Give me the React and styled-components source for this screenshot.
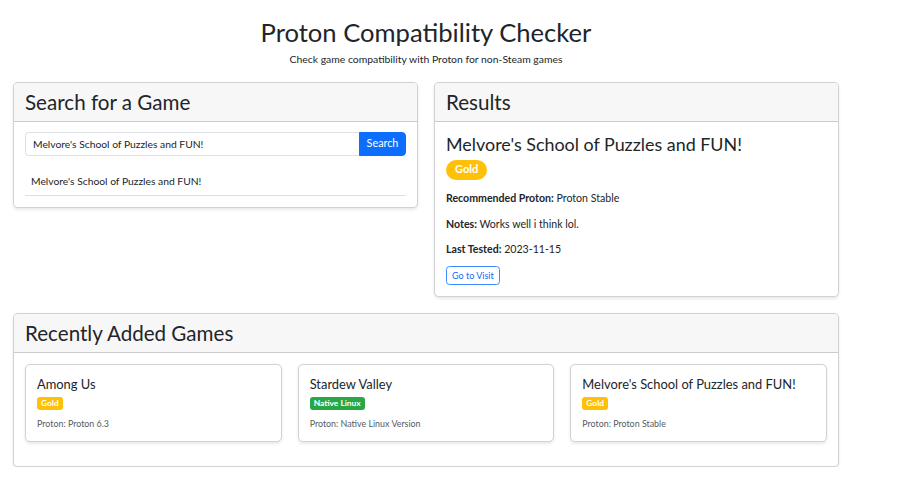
import styled, { createGlobalStyle } from "styled-components";

const GlobalStyle = createGlobalStyle`
  * {
    box-sizing: border-box;
  }

  body {
    margin: 0;
    background: #fff;
    color: #212529;
    font-family: Lato, "Open Sans", sans-serif;
    font-size: 10.3px;
    line-height: 16.8px;
  }
`;

const games = [
  { name: "Among Us", rating: "Gold", proton: "Proton 6.3" },
  { name: "Stardew Valley", rating: "Native Linux", proton: "Native Linux Version" },
  { name: "Melvore's School of Puzzles and FUN!", rating: "Gold", proton: "Proton Stable" },
];

const ratingColors = {
  Gold: "#ffc107",
  "Native Linux": "#28a745",
};

export default function App() {
  return (
    <>
      <GlobalStyle />
      <Container>
        <Header>
          <Title>Proton Compatibility Checker</Title>
          <Subtitle>Check game compatibility with Proton for non-Steam games</Subtitle>
        </Header>

        <TopRow>
          <Card>
            <CardHeader>
              <CardTitle>Search for a Game</CardTitle>
            </CardHeader>
            <CardBody>
              <SearchGroup>
                <SearchInput defaultValue="Melvore's School of Puzzles and FUN!" />
                <SearchButton type="button">Search</SearchButton>
              </SearchGroup>
              <ResultList>
                <ResultItem>Melvore's School of Puzzles and FUN!</ResultItem>
              </ResultList>
            </CardBody>
          </Card>

          <Card>
            <CardHeader>
              <CardTitle>Results</CardTitle>
            </CardHeader>
            <CardBody>
              <GameTitle>Melvore's School of Puzzles and FUN!</GameTitle>
              <PillBadge $color={ratingColors.Gold}>Gold</PillBadge>
              <Detail>
                <strong>Recommended Proton:</strong> Proton Stable
              </Detail>
              <Detail>
                <strong>Notes:</strong> Works well i think lol.
              </Detail>
              <Detail>
                <strong>Last Tested:</strong> 2023-11-15
              </Detail>
              <VisitButton type="button">Go to Visit</VisitButton>
            </CardBody>
          </Card>
        </TopRow>

        <RecentCard>
          <CardHeader>
            <CardTitle>Recently Added Games</CardTitle>
          </CardHeader>
          <CardBody $bottom="24px">
            <GameGrid>
              {games.map((game) => (
                <GameCard key={game.name}>
                  <GameName>{game.name}</GameName>
                  <SmallBadge $color={ratingColors[game.rating]}>{game.rating}</SmallBadge>
                  <ProtonText>Proton: {game.proton}</ProtonText>
                </GameCard>
              ))}
            </GameGrid>
          </CardBody>
        </RecentCard>
      </Container>
    </>
  );
}

const Container = styled.div`
  width: 826px;
  margin-left: 13px;
  padding-top: 15px;
`;

const Header = styled.header`
  text-align: center;
  margin-bottom: 14px;
`;

const Title = styled.h1`
  margin: 0 0 2px;
  font-size: 25.6px;
  font-weight: 400;
  line-height: 34px;
`;

const Subtitle = styled.p`
  margin: 0;
  font-size: 10.4px;
  line-height: 16.8px;
`;

const TopRow = styled.div`
  display: grid;
  grid-template-columns: 1fr 1fr;
  gap: 16px;
  align-items: start;
`;

const Card = styled.section`
  background: #fff;
  border: 1px solid rgba(0, 0, 0, 0.175);
  border-radius: 5px;
  box-shadow: 0 1.4px 3px rgba(0, 0, 0, 0.09);
  overflow: hidden;
`;

const RecentCard = styled(Card)`
  margin-top: 16px;
`;

const CardHeader = styled.div`
  display: flex;
  align-items: center;
  height: 39px;
  padding: 0 11px;
  background: #f7f7f7;
  border-bottom: 1px solid rgba(0, 0, 0, 0.175);
`;

const CardTitle = styled.h3`
  margin: 0;
  font-size: 20.6px;
  font-weight: 400;
  line-height: 24px;
`;

const CardBody = styled.div`
  padding: 10px 11px ${({ $bottom }) => $bottom || "11px"};
`;

const SearchGroup = styled.div`
  display: flex;
  height: 24px;
`;

const SearchInput = styled.input`
  flex: 1;
  min-width: 0;
  height: 100%;
  padding: 0 7px;
  border: 1px solid #dee2e6;
  border-right: none;
  border-radius: 4px 0 0 4px;
  font: inherit;
  color: #212529;
  outline: none;
`;

const SearchButton = styled.button`
  width: 47px;
  height: 100%;
  padding: 0;
  border: 1px solid #0d6efd;
  border-radius: 0 4px 4px 0;
  background: #0d6efd;
  color: #fff;
  font: inherit;
  font-size: 10.8px;
`;

const ResultList = styled.ul`
  list-style: none;
  margin: 12px 0 0;
  padding: 0;
`;

const ResultItem = styled.li`
  padding: 5px 6px;
  border-bottom: 1px solid rgba(0, 0, 0, 0.125);
`;

const GameTitle = styled.h4`
  margin: 2px 0 5px;
  font-size: 17.9px;
  font-weight: 400;
  line-height: 21px;
`;

const PillBadge = styled.span`
  display: inline-flex;
  align-items: center;
  height: 20px;
  padding: 0 9px;
  border-radius: 10px;
  background: ${({ $color }) => $color};
  color: #fff;
  font-size: 11px;
  font-weight: 700;
  margin-bottom: 10px;
`;

const Detail = styled.p`
  margin: 0 0 9px;
  font-size: 10.6px;

  strong {
    font-weight: 700;
  }
`;

const VisitButton = styled.button`
  display: block;
  height: 19px;
  margin-top: -1px;
  padding: 0 5px;
  border: 1px solid #3d8bfd;
  border-radius: 3.5px;
  background: #fff;
  color: #0d6efd;
  font-family: inherit;
  font-size: 9px;
`;

const GameGrid = styled.div`
  display: grid;
  grid-template-columns: repeat(3, 1fr);
  gap: 16px;
  padding-top: 1px;
`;

const GameCard = styled.div`
  display: flex;
  flex-direction: column;
  align-items: flex-start;
  padding: 11px 11px 10px;
  border: 1px solid rgba(0, 0, 0, 0.175);
  border-radius: 5px;
  box-shadow: 0 1.4px 3px rgba(0, 0, 0, 0.09);
`;

const GameName = styled.h5`
  margin: 0 0 4px;
  font-size: 12.9px;
  font-weight: 400;
  line-height: 16.8px;
`;

const SmallBadge = styled.span`
  display: inline-flex;
  align-items: center;
  height: 13px;
  padding: 0 4px;
  border-radius: 3px;
  background: ${({ $color }) => $color};
  color: #fff;
  font-size: 8.4px;
  font-weight: 700;
`;

const ProtonText = styled.small`
  margin-top: 7px;
  font-size: 8.9px;
  line-height: 14px;
  color: #555b61;
`;
